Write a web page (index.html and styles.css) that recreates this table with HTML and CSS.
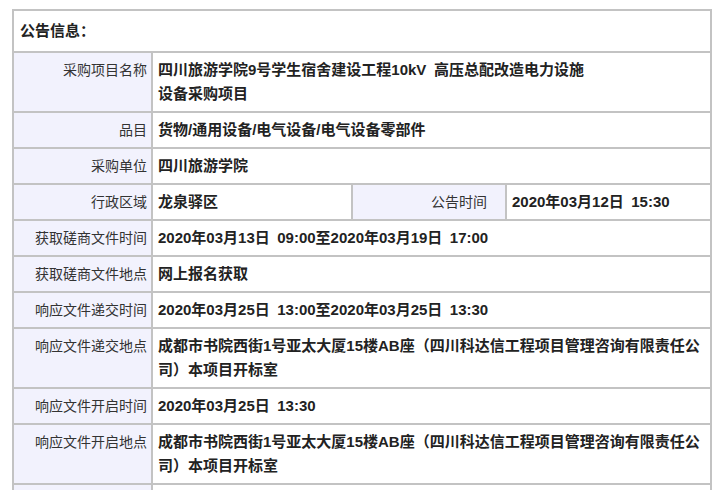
FILE: index.html
```html
<!DOCTYPE html>
<html lang="zh-CN">
<head>
<meta charset="utf-8">
<title>公告信息</title>
<link rel="stylesheet" href="styles.css">
</head>
<body>
<div class="page">
  <div class="info-grid">
    <div class="cell head">公告信息：</div>

    <div class="cell label">采购项目名称</div>
    <div class="cell value span3">四川旅游学院9号学生宿舍建设工程10kV&ensp;高压总配改造电力设施<br>设备采购项目</div>

    <div class="cell label">品目</div>
    <div class="cell value span3">货物/通用设备/电气设备/电气设备零部件</div>

    <div class="cell label">采购单位</div>
    <div class="cell value span3">四川旅游学院</div>

    <div class="cell label">行政区域</div>
    <div class="cell value">龙泉驿区</div>
    <div class="cell label label-wide">公告时间</div>
    <div class="cell value">2020年03月12日&ensp;15:30</div>

    <div class="cell label">获取磋商文件时间</div>
    <div class="cell value span3">2020年03月13日&ensp;09:00至2020年03月19日&ensp;17:00</div>

    <div class="cell label">获取磋商文件地点</div>
    <div class="cell value span3">网上报名获取</div>

    <div class="cell label">响应文件递交时间</div>
    <div class="cell value span3">2020年03月25日&ensp;13:00至2020年03月25日&ensp;13:30</div>

    <div class="cell label">响应文件递交地点</div>
    <div class="cell value span3">成都市书院西街1号亚太大厦15楼AB座（四川科达信工程项目管理咨询有限责任公<br>司）本项目开标室</div>

    <div class="cell label">响应文件开启时间</div>
    <div class="cell value span3">2020年03月25日&ensp;13:30</div>

    <div class="cell label">响应文件开启地点</div>
    <div class="cell value span3">成都市书院西街1号亚太大厦15楼AB座（四川科达信工程项目管理咨询有限责任公<br>司）本项目开标室</div>

    <div class="cell label">&nbsp;</div>
    <div class="cell value span3">&nbsp;</div>
  </div>
</div>
</body>
</html>
```

FILE: styles.css
```css
html, body {
  margin: 0;
  padding: 0;
  background: #ffffff;
}

body {
  font-family: "Liberation Sans", "Noto Sans CJK SC", sans-serif;
  color: #333333;
}

.page {
  padding: 9px 0 0 12px;
}

.info-grid {
  width: 700px;
  box-sizing: border-box;
  display: grid;
  grid-template-columns: 137px 198px 152px 203px;
  gap: 2px;
  padding: 2px;
  background: #c3c3c3;
}

.cell {
  background: #ffffff;
  line-height: 24px;
  padding: 5px 5px;
  font-size: 14px;
}

.head {
  grid-column: 1 / -1;
  padding: 8px 6px;
  font-size: 15px;
  font-weight: bold;
  color: #222222;
}

.label {
  background: #f2f2fd;
  text-align: right;
  padding-right: 4px;
  color: #333333;
  white-space: nowrap;
}

.label-wide {
  padding-right: 18px;
}

.value {
  font-size: 15px;
  font-weight: bold;
  color: #222222;
}

.span3 {
  grid-column: 2 / -1;
}
```
